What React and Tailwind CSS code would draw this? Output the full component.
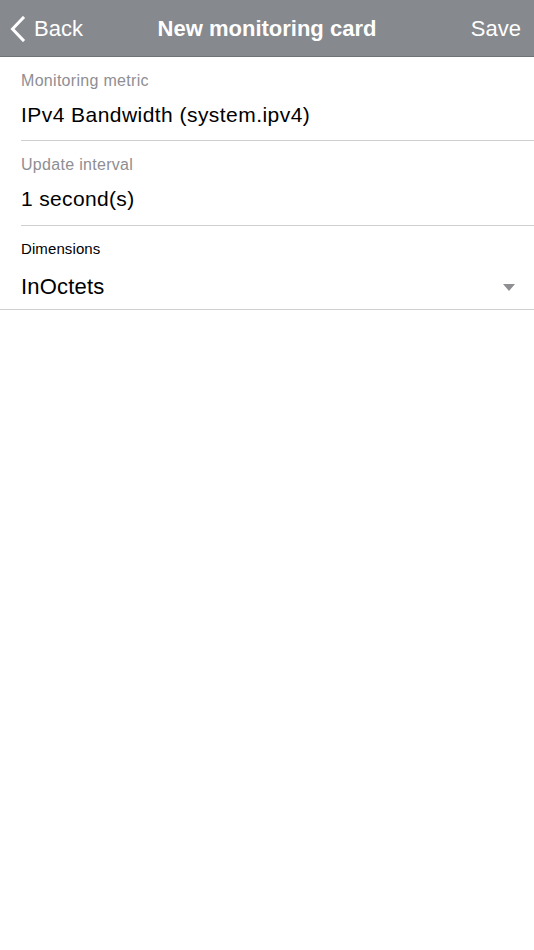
import React from 'react';

function Field({ label, value, labelClass, valueClass, padClass, last }) {
    return (
        <div className={last ? 'border-b border-[#cfcfd2]' : 'pl-[21px]'}>
            <div className={last ? 'pl-[21px] pr-[18px] pt-[13px] pb-[7px]' : `border-b border-[#cfcfd2] pt-[14px] ${padClass}`}>
                <div className={`leading-[20px] ${labelClass}`}>{label}</div>
                <div className={`flex items-center justify-between text-black ${valueClass}`}>
                    <span>{value}</span>
                    {last && (
                        <svg width="12" height="7" viewBox="0 0 12 7" className="mr-[1px]">
                            <polygon points="0,0 12,0 6,7" fill="#8e8e93" />
                        </svg>
                    )}
                </div>
            </div>
        </div>
    );
}

export default function App() {
    return (
        <div className="min-h-screen w-[534px] bg-white font-['Liberation_Sans',Arial,sans-serif]">

            {/* Nav bar */}
            <div className="h-[57px] bg-[#86898e] border-b border-[#6f7277] flex items-center justify-between px-[10px] text-white">
                <div className="flex items-center gap-[8px] w-[100px]">
                    <svg width="16" height="26" viewBox="0 0 16 26" className="mt-[2px]">
                        <polyline points="13,2 2.5,13 13,24" fill="none" stroke="white" strokeWidth="3" strokeLinecap="square" />
                    </svg>
                    <span className="text-[22px] leading-none pt-[2px]">Back</span>
                </div>
                <div className="text-[22px] font-bold leading-none pt-[2px]">New monitoring card</div>
                <div className="w-[100px] text-right pr-[3px] text-[22px] leading-none pt-[2px]">Save</div>
            </div>

            <Field label="Monitoring metric" value="IPv4 Bandwidth (system.ipv4)" padClass="pb-[11px]"
                labelClass="text-[16px] tracking-[0.3px] text-[#8e8e93]" valueClass="mt-[10px] text-[21px] tracking-[0.45px] leading-[28px]" />
            <Field label="Update interval" value="1 second(s)" padClass="pb-[12px]"
                labelClass="text-[16px] tracking-[0.3px] text-[#8e8e93]" valueClass="mt-[10px] text-[21px] tracking-[0.35px] leading-[28px]" />
            <Field label="Dimensions" value="InOctets"
                labelClass="text-[15px] tracking-[0.1px] text-black" valueClass="mt-[13px] text-[22px] tracking-[0.2px] leading-[30px]" last />
        </div>
    );
}
